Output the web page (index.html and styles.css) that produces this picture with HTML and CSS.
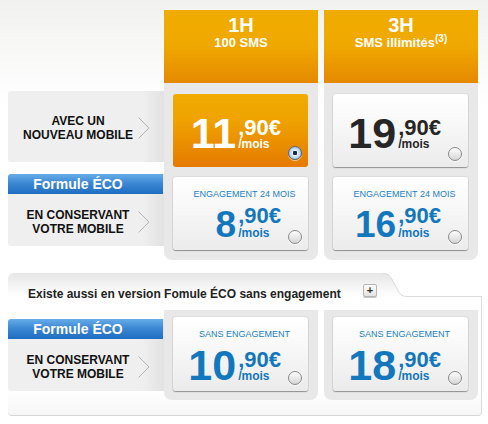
FILE: index.html
```html
<!DOCTYPE html>
<html lang="fr">
<head>
<meta charset="utf-8">
<title>Forfaits</title>
<link rel="stylesheet" href="styles.css">
</head>
<body>
<div class="page">
  <section class="offers">
    <div class="labels">
      <div class="label label-plain">
        <span class="label-text">AVEC UN<br>NOUVEAU MOBILE</span>
        <svg class="chev" viewBox="0 0 12 22" width="12" height="22"><polyline points="0.5,0.5 11,11 0.5,21.5" fill="none" stroke="#b4b4b4" stroke-width="1"/></svg>
      </div>
      <div class="label label-eco">
        <div class="eco-bar">Formule ÉCO</div>
        <div class="label-body">
          <span class="label-text">EN CONSERVANT<br>VOTRE MOBILE</span>
          <svg class="chev" viewBox="0 0 12 22" width="12" height="22"><polyline points="0.5,0.5 11,11 0.5,21.5" fill="none" stroke="#b4b4b4" stroke-width="1"/></svg>
        </div>
      </div>
    </div>

    <div class="plan">
      <div class="plan-head">
        <div class="plan-h">1H</div>
        <div class="plan-sub">100 SMS</div>
      </div>
      <div class="plan-body">
        <div class="card card-hot card-simple">
          <div class="price price-big"><span class="int">11</span><span class="dec"><span class="cents">,90€</span><span class="per">/mois</span></span></div>
          <span class="radio radio-on"></span>
        </div>
        <div class="card card-label">
          <div class="tag">ENGAGEMENT 24 MOIS</div>
          <div class="price price-mid blue"><span class="int">8</span><span class="dec"><span class="cents">,90€</span><span class="per">/mois</span></span></div>
          <span class="radio"></span>
        </div>
      </div>
    </div>

    <div class="plan">
      <div class="plan-head">
        <div class="plan-h">3H</div>
        <div class="plan-sub">SMS illimités<sup>(3)</sup></div>
      </div>
      <div class="plan-body">
        <div class="card card-simple">
          <div class="price price-big dark"><span class="int">19</span><span class="dec"><span class="cents">,90€</span><span class="per">/mois</span></span></div>
          <span class="radio"></span>
        </div>
        <div class="card card-label">
          <div class="tag">ENGAGEMENT 24 MOIS</div>
          <div class="price price-mid blue"><span class="int">16</span><span class="dec"><span class="cents">,90€</span><span class="per">/mois</span></span></div>
          <span class="radio"></span>
        </div>
      </div>
    </div>
  </section>

  <section class="alt">
    <div class="tabbar">
      <div class="tab">
        <span class="tab-text">Existe aussi en version Fomule ÉCO sans engagement</span>
        <span class="plus">+</span>
      </div>
      <svg class="tab-curve" viewBox="0 0 24 24" width="24" height="24">
        <defs>
          <linearGradient id="tg" x1="0" y1="0" x2="0" y2="1">
            <stop offset="0" stop-color="#e6e6e6"/>
            <stop offset="0.7" stop-color="#f8f8f8"/>
            <stop offset="1" stop-color="#ffffff"/>
          </linearGradient>
        </defs>
        <path d="M0 0 C6 0 8 4 12 12 C16 20 18 23.5 24 23.5 L24 24 L0 24 Z" fill="url(#tg)"/>
        <path d="M0 0.5 C6 0.5 8 4 12 12 C16 20 18 23.5 24 23.5" fill="none" stroke="#dadada" stroke-width="1"/>
      </svg>
      <div class="tab-fill"></div>
    </div>
    <div class="alt-panel">
      <div class="labels labels-alt">
        <div class="label label-eco">
          <div class="eco-bar">Formule ÉCO</div>
          <div class="label-body">
            <span class="label-text">EN CONSERVANT<br>VOTRE MOBILE</span>
            <svg class="chev" viewBox="0 0 12 22" width="12" height="22"><polyline points="0.5,0.5 11,11 0.5,21.5" fill="none" stroke="#b4b4b4" stroke-width="1"/></svg>
          </div>
        </div>
      </div>
      <div class="plan">
        <div class="plan-body plan-body-alt">
          <div class="card card-label card-tall">
            <div class="tag">SANS ENGAGEMENT</div>
            <div class="price price-big price-low blue"><span class="int">10</span><span class="dec"><span class="cents">,90€</span><span class="per">/mois</span></span></div>
            <span class="radio"></span>
          </div>
        </div>
      </div>
      <div class="plan">
        <div class="plan-body plan-body-alt">
          <div class="card card-label card-tall">
            <div class="tag">SANS ENGAGEMENT</div>
            <div class="price price-big price-low blue"><span class="int">18</span><span class="dec"><span class="cents">,90€</span><span class="per">/mois</span></span></div>
            <span class="radio"></span>
          </div>
        </div>
      </div>
    </div>
  </section>
</div>
</body>
</html>
```
FILE: styles.css
```css
* { box-sizing: border-box; }
html, body { margin: 0; padding: 0; }
body {
  width: 488px;
  height: 424px;
  overflow: hidden;
  font-family: "Liberation Sans", Arial, sans-serif;
  background: linear-gradient(#f1f1ef 0, #f8f8f7 50px, #fdfdfd 90px, #fff 110px);
}
.page { padding: 10px 0 0 8px; }

.offers { display: flex; align-items: flex-start; }

.labels {
  width: 156px;
  flex: none;
  padding-top: 81px;
  display: flex;
  flex-direction: column;
  gap: 12px;
}
.labels-alt { padding-top: 9px; }

.label {
  border-radius: 3px 0 0 3px;
  background: linear-gradient(to right, #efefef 0, #efefef 86%, #e2e2e2 100%);
  overflow: hidden;
}
.label-plain { height: 71px; display: flex; align-items: center; padding-top: 2px; }
.label-eco { height: 72px; display: flex; flex-direction: column; }
.eco-bar {
  height: 20px;
  width: 155px;
  padding-right: 15px;
  background: linear-gradient(#66ade8, #3d88d4 45%, #1e6dc1);
  color: #fff;
  font-weight: bold;
  font-size: 14px;
  line-height: 20px;
  text-align: center;
}
.label-body { flex: 1; display: flex; align-items: center; padding-top: 3px; }
.label-text {
  width: 140px;
  flex: none;
  text-align: center;
  font-weight: bold;
  font-size: 12px;
  line-height: 14px;
  color: #111;
}
.chev { flex: none; margin-left: -10px; display: block; }

.plan { width: 154px; flex: none; }
.plan + .plan { margin-left: 6px; }
.plan-head {
  height: 73px;
  background: linear-gradient(#f0ac00, #efa800 50%, #e58900);
  color: #fff;
  text-align: center;
  font-weight: 700;
  padding-top: 5px;
}
.plan-h { font-size: 20px; line-height: 20px; font-weight: 700; }
.plan-sub { font-size: 13px; line-height: 15px; font-weight: 700; }
.plan-sub sup { font-size: 10px; line-height: 0; vertical-align: 5px; }

.plan-body {
  background: #e8e8e8;
  border-radius: 0 0 8px 8px;
  padding: 11px 10px 10px 9px;
  display: flex;
  flex-direction: column;
  gap: 10px;
}
.plan-body-alt { padding: 7px 10px 9px 9px; }

.card {
  position: relative;
  height: 73px;
  border-radius: 3px;
  background: linear-gradient(#ffffff, #f8f8f8 40%, #ebebeb);
  box-shadow: 0 1px 1px rgba(0, 0, 0, 0.35), 0 0 0 1px rgba(0, 0, 0, 0.05);
  text-align: center;
  padding-right: 10px;
}
.card-tall { height: 74px; }
.card-hot {
  background: linear-gradient(#f0ab00, #efa300 35%, #e57a00);
  color: #fff;
  box-shadow: none;
}
.card-simple { padding-top: 18px; }
.card-label { padding-top: 12px; }

.tag {
  font-size: 9px;
  line-height: 11px;
  color: #1a7fc4;
  padding-left: 18px;
}

.price {
  white-space: nowrap;
  font-weight: bold;
  line-height: 1;
  text-align: right;
  padding-right: 17px;
}
.price .dec { display: inline-block; vertical-align: baseline; text-align: left; margin-left: 2px; }
.price .cents { display: block; }
.price .per { display: block; font-size: 12px; }

.price-big { font-size: 43px; }
.price-big .cents { font-size: 22px; line-height: 17px; }
.price-big .per { line-height: 16px; }
.price-low { margin-top: 4px; }
.price-low .per { line-height: 17px; }

.price-mid { font-size: 37px; margin-top: 6px; }
.price-mid .cents { font-size: 22px; line-height: 16px; }
.price-mid .per { line-height: 18px; }

.dark { color: #262626; }
.blue { color: #1377bd; }

.radio {
  position: absolute;
  right: 6px;
  bottom: 6px;
  width: 14px;
  height: 14px;
  border-radius: 50%;
  border: 1px solid #8a8a8a;
  background: linear-gradient(#fdfdfd, #e6e6e6 60%, #d4d4d4);
  box-shadow: 0 1px 0 rgba(255, 255, 255, 0.6);
}
.card-hot .radio { bottom: 7px; }
.radio-on {
  border-color: #5a6878;
  background: radial-gradient(circle at 50% 50%, #1d2b3d 0, #1d2b3d 2px, #e4f1ff 2.5px, #b5d5f5 5px, #7fb0e2 7px);
}

.alt { margin-top: 13px; width: 474px; }
.tabbar { display: flex; height: 24px; }
.tab {
  width: 375px;
  flex: none;
  display: flex;
  align-items: flex-start;
  border-radius: 6px 0 0 0;
  background: linear-gradient(#e6e6e6, #f8f8f8 70%, #fff);
  padding-left: 20px;
}
.tab-text {
  margin-top: 14px;
  font-size: 12px;
  line-height: 14px;
  font-weight: bold;
  color: #222;
  white-space: nowrap;
}
.plus {
  margin-left: auto;
  margin-right: 6px;
  margin-top: 11px;
  width: 14px;
  height: 13px;
  border: 1px solid #b5b5b5;
  border-radius: 2px;
  background: linear-gradient(#ffffff, #e2e2e2);
  box-shadow: 0 1px 0 #c8c8c8;
  font-size: 11px;
  line-height: 11px;
  font-weight: bold;
  color: #333;
  text-align: center;
}
.tab-curve { flex: none; display: block; }
.tab-fill { flex: 1; border-bottom: 1px solid #dcdcdc; }

.alt-panel {
  display: flex;
  align-items: flex-start;
  padding-top: 13px;
  padding-bottom: 15px;
  border-right: 1px solid #dcdcdc;
  border-bottom: 1px solid #d6d6d6;
  border-radius: 0 0 4px 4px;
  background: linear-gradient(#fff 0, #fff 78%, #f6f6f6 100%);
}
```
